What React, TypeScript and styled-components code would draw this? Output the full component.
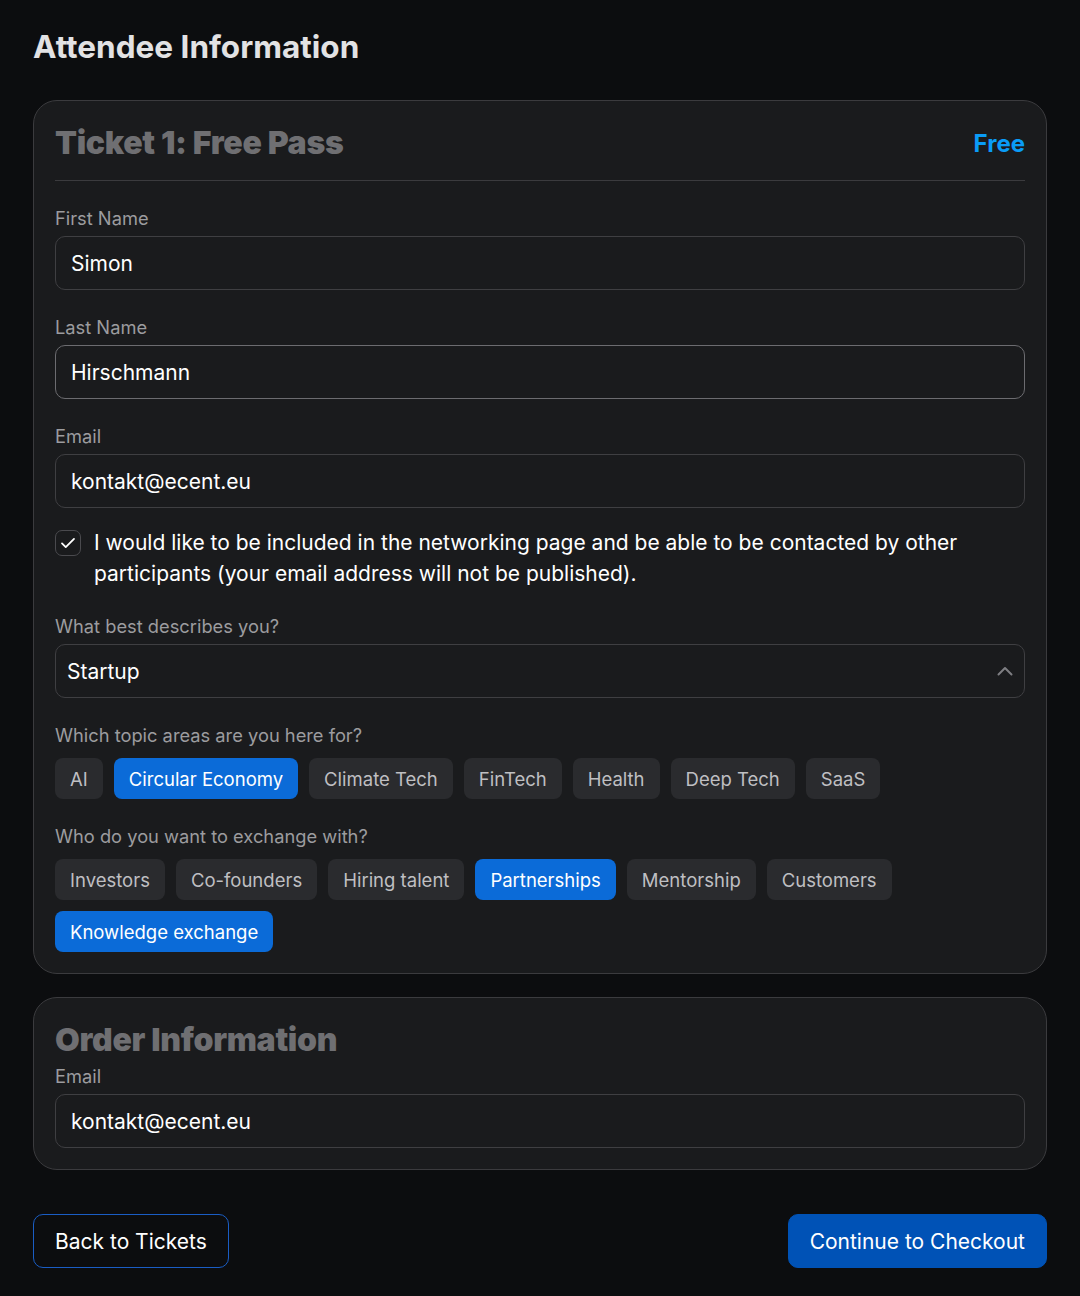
import React from "react";
import styled, { createGlobalStyle } from "styled-components";

const Global = createGlobalStyle`
  html, body { margin: 0; padding: 0; background: #0c0d0f; }
  body { font-family: Inter, "Noto Sans", "Liberation Sans", sans-serif; color: #fff; -webkit-font-smoothing: antialiased; }
  * { box-sizing: border-box; }
`;

const Page = styled.div`
  padding: 29px 33px 29px 33px;
  display: flex;
  flex-direction: column;
`;

const PageTitle = styled.h1`
  margin: 0 0 35px 0;
  font-size: 31.5px;
  line-height: 36px;
  font-weight: 700;
  color: #e2e2e4;
`;

const Card = styled.section<{ $gapAfter?: number }>`
  background: #1a1b1d;
  border: 1px solid #3b3b3e;
  border-radius: 24px;
  padding: 21px;
  margin-bottom: ${(p) => p.$gapAfter ?? 0}px;
  display: flex;
  flex-direction: column;
`;

const CardHeader = styled.div`
  display: flex;
  align-items: center;
  justify-content: space-between;
  padding-bottom: 16px;
  border-bottom: 1px solid #3b3b3e;
`;

const CardTitle = styled.h2`
  margin: 0;
  font-size: 32px;
  line-height: 42px;
  font-weight: 900;
  color: #6f6f72;
  letter-spacing: -0.3px;
`;

const Price = styled.span`
  font-size: 24px;
  font-weight: 700;
  color: #0a9cf7;
`;

const Field = styled.div<{ $top: number }>`
  display: flex;
  flex-direction: column;
  margin-top: ${(p) => p.$top}px;
`;

const Label = styled.label<{ $gap?: number }>`
  font-size: 18.3px;
  line-height: 22px;
  color: #9c9c9f;
  margin-bottom: ${(p) => p.$gap ?? 7}px;
`;

const Input = styled.div<{ $focused?: boolean }>`
  height: 54px;
  border: 1px solid ${(p) => (p.$focused ? "#6c6c70" : "#3f3f42")};
  border-radius: 10px;
  background: #1a1b1d;
  padding: 0 15px;
  display: flex;
  align-items: center;
  font-size: 21px;
  color: #fff;
`;

const Select = styled(Input)`
  padding: 0 11px;
  justify-content: space-between;
`;

const CheckRow = styled.div`
  display: flex;
  gap: 13px;
  align-items: flex-start;
  margin-top: 19px;
`;

const CheckBox = styled.span`
  flex: none;
  width: 26px;
  height: 26px;
  margin-top: 3px;
  border: 1px solid #4a4a4e;
  border-radius: 7px;
  display: flex;
  align-items: center;
  justify-content: center;
`;

const CheckText = styled.p`
  margin: 0;
  font-size: 21px;
  line-height: 31px;
  color: #fff;
`;

const Chips = styled.div`
  display: flex;
  flex-wrap: wrap;
  gap: 11px 11px;
`;

const Chip = styled.span<{ $active?: boolean }>`
  height: 41px;
  padding: 0 15px;
  border-radius: 8px;
  display: inline-flex;
  align-items: center;
  font-size: 18.5px;
  background: ${(p) => (p.$active ? "#0b6bd8" : "#2a2b2e")};
  color: ${(p) => (p.$active ? "#ffffff" : "#bfbfc2")};
`;

const Actions = styled.div`
  display: flex;
  justify-content: space-between;
  margin-top: 44px;
`;

const Button = styled.button<{ $primary?: boolean }>`
  height: 54px;
  padding: 0 21px;
  border-radius: 10px;
  font-family: inherit;
  font-size: 21px;
  color: #fff;
  border: 1px solid ${(p) => (p.$primary ? "#0052b6" : "#1a5dc4")};
  background: ${(p) => (p.$primary ? "#0052b6" : "#0c0d0f")};
`;

const topics = ["AI", "Circular Economy", "Climate Tech", "FinTech", "Health", "Deep Tech", "SaaS"];
const exchange = ["Investors", "Co-founders", "Hiring talent", "Partnerships", "Mentorship", "Customers", "Knowledge exchange"];
const activeTopics = ["Circular Economy"];
const activeExchange = ["Partnerships", "Knowledge exchange"];

export default function App() {
  return (
    <>
      <Global />
      <Page>
        <PageTitle>Attendee Information</PageTitle>
        <Card $gapAfter={23}>
          <CardHeader>
            <CardTitle>Ticket 1: Free Pass</CardTitle>
            <Price>Free</Price>
          </CardHeader>
          <Field $top={26}>
            <Label>First Name</Label>
            <Input>Simon</Input>
          </Field>
          <Field $top={26}>
            <Label>Last Name</Label>
            <Input $focused>Hirschmann</Input>
          </Field>
          <Field $top={26}>
            <Label>Email</Label>
            <Input>kontakt@ecent.eu</Input>
          </Field>
          <CheckRow>
            <CheckBox>
              <svg width="18" height="18" viewBox="0 0 24 24" fill="none" stroke="#fff" strokeWidth="2.4" strokeLinecap="round" strokeLinejoin="round">
                <path d="M4 12.5l5 5L20 6.5" />
              </svg>
            </CheckBox>
            <CheckText>
              I would like to be included in the networking page and be able to be contacted by other participants (your email address will not be published).
            </CheckText>
          </CheckRow>
          <Field $top={26}>
            <Label>What best describes you?</Label>
            <Select>
              <span>Startup</span>
              <svg width="16" height="10" viewBox="0 0 16 10" fill="none" stroke="#7e7e82" strokeWidth="2" strokeLinecap="round" strokeLinejoin="round">
                <path d="M1.5 8.5L8 2l6.5 6.5" />
              </svg>
            </Select>
          </Field>
          <Field $top={26}>
            <Label $gap={12}>Which topic areas are you here for?</Label>
            <Chips>
              {topics.map((t) => (
                <Chip key={t} $active={activeTopics.includes(t)}>{t}</Chip>
              ))}
            </Chips>
          </Field>
          <Field $top={26}>
            <Label $gap={12}>Who do you want to exchange with?</Label>
            <Chips>
              {exchange.map((t) => (
                <Chip key={t} $active={activeExchange.includes(t)}>{t}</Chip>
              ))}
            </Chips>
          </Field>
        </Card>
        <Card>
          <CardTitle>Order Information</CardTitle>
          <Field $top={4}>
            <Label>Email</Label>
            <Input>kontakt@ecent.eu</Input>
          </Field>
        </Card>
        <Actions>
          <Button>Back to Tickets</Button>
          <Button $primary>Continue to Checkout</Button>
        </Actions>
      </Page>
    </>
  );
}
